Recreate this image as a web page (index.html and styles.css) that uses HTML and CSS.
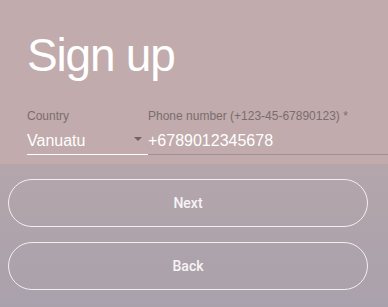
FILE: index.html
```html
<!DOCTYPE html>
<html lang="en">
<head>
<meta charset="utf-8">
<title>Sign up</title>
<link rel="stylesheet" href="styles.css">
</head>
<body>
<div class="page">
  <header class="top">
    <h1 class="title">Sign up</h1>
    <div class="fields">
      <div class="field country">
        <label class="label">Country</label>
        <div class="control">
          <span class="value">Vanuatu</span>
          <span class="arrow"></span>
        </div>
      </div>
      <div class="field phone">
        <label class="label">Phone number (+123-45-67890123) *</label>
        <div class="control">
          <span class="value">+6789012345678</span>
        </div>
      </div>
    </div>
  </header>
  <main class="actions">
    <button class="btn" type="button">Next</button>
    <button class="btn" type="button">Back</button>
  </main>
</div>
</body>
</html>
```
FILE: styles.css
```css
html, body {
  margin: 0;
  padding: 0;
}
body {
  width: 388px;
  height: 307px;
  overflow: hidden;
  font-family: "Liberation Sans", Arial, sans-serif;
  background: #ada2ab;
}
.page {
  display: flex;
  flex-direction: column;
  height: 307px;
}
.top {
  height: 164px;
  box-sizing: border-box;
  background: #c1abac;
  padding: 32px 0 0 27px;
  display: flex;
  flex-direction: column;
}
.title {
  margin: 0;
  font-weight: 400;
  font-size: 46px;
  line-height: 46px;
  letter-spacing: -1.2px;
  color: #ffffff;
}
.fields {
  margin-top: 31px;
  display: flex;
}
.field {
  display: flex;
  flex-direction: column;
}
.country {
  width: 121px;
}
.phone {
  flex: 1;
}
.label {
  font-size: 12px;
  line-height: 14px;
  color: #7b6d6f;
  white-space: nowrap;
}
.control {
  margin-top: 8px;
  height: 19px;
  padding-bottom: 4px;
  display: flex;
  align-items: flex-start;
  justify-content: space-between;
}
.country .control {
  border-bottom: 1px solid #ffffff;
}
.phone .control {
  border-bottom: 1px solid #9f9092;
}
.value {
  font-size: 16px;
  line-height: 19px;
  color: #ffffff;
}
.arrow {
  width: 0;
  height: 0;
  margin: 6px 6px 0 0;
  border-left: 4px solid transparent;
  border-right: 4px solid transparent;
  border-top: 4px solid #6f6365;
}
.actions {
  flex: 1;
  background: linear-gradient(to bottom, #b4a6ab, #a9a1ac);
  padding: 15px 20px 0 8px;
  display: flex;
  flex-direction: column;
  gap: 15px;
}
.btn {
  height: 48px;
  width: 360px;
  box-sizing: border-box;
  border: 1px solid #f4eef0;
  border-radius: 24px;
  background: transparent;
  color: #f8f3f5;
  font-family: Roboto, "Liberation Sans", sans-serif;
  font-weight: 500;
  font-size: 14px;
  padding: 0;
  cursor: pointer;
}
```
